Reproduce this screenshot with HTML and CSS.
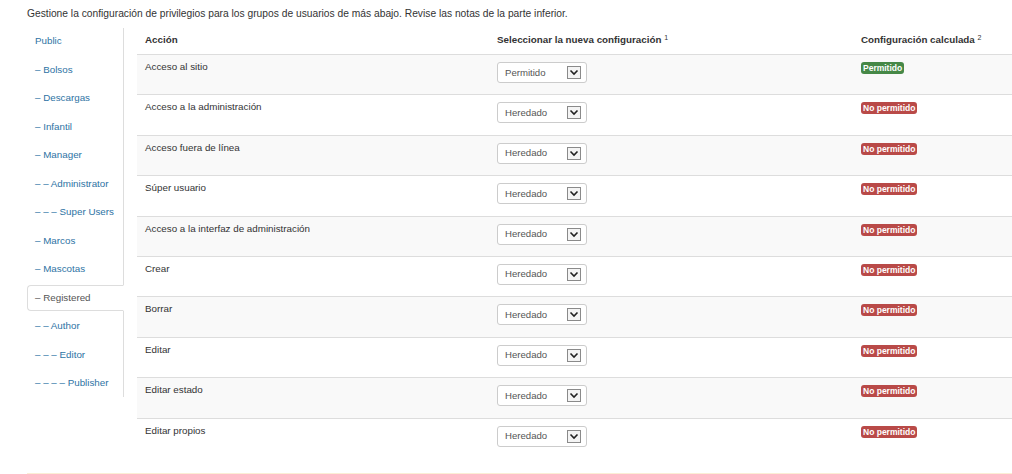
FILE: index.html
```html
<!DOCTYPE html>
<html lang="es">
<head>
    <meta charset="UTF-8">
    <meta name="viewport" content="width=device-width, initial-scale=1.0">
    <title>Permisos</title>
    <link rel="stylesheet" href="styles.css">
</head>
<body>
    <p class="intro">Gestione la configuración de privilegios para los grupos de usuarios de más abajo. Revise las notas de la parte inferior.</p>

    <div class="permissions">
        <!-- Group tabs -->
        <ul class="group-tabs">
            <li><a href="#">Public</a></li>
            <li><a href="#">– Bolsos</a></li>
            <li><a href="#">– Descargas</a></li>
            <li><a href="#">– Infantil</a></li>
            <li><a href="#">– Manager</a></li>
            <li><a href="#">– – Administrator</a></li>
            <li><a href="#">– – – Super Users</a></li>
            <li><a href="#">– Marcos</a></li>
            <li><a href="#">– Mascotas</a></li>
            <li class="active"><a href="#">– Registered</a></li>
            <li><a href="#">– – Author</a></li>
            <li><a href="#">– – – Editor</a></li>
            <li><a href="#">– – – – Publisher</a></li>
        </ul>

        <!-- Rules table -->
        <table class="rules">
            <thead>
                <tr>
                    <th class="col-action">Acción</th>
                    <th class="col-select">Seleccionar la nueva configuración <sup>1</sup></th>
                    <th>Configuración calculada <sup>2</sup></th>
                </tr>
            </thead>
            <tbody>
                <tr>
                    <td>Acceso al sitio</td>
                    <td><div class="select"><span>Permitido</span><svg class="arrow" width="14" height="13" viewBox="0 0 14 13"><rect x="0.5" y="0.5" width="13" height="12" fill="#f4f4f4" stroke="#8a8a8a"/><path d="M3.5 4.5 L7 8 L10.5 4.5" fill="none" stroke="#222" stroke-width="1.6"/></svg></div></td>
                    <td><span class="badge allowed">Permitido</span></td>
                </tr>
                <tr>
                    <td>Acceso a la administración</td>
                    <td><div class="select"><span>Heredado</span><svg class="arrow" width="14" height="13" viewBox="0 0 14 13"><rect x="0.5" y="0.5" width="13" height="12" fill="#f4f4f4" stroke="#8a8a8a"/><path d="M3.5 4.5 L7 8 L10.5 4.5" fill="none" stroke="#222" stroke-width="1.6"/></svg></div></td>
                    <td><span class="badge denied">No permitido</span></td>
                </tr>
                <tr>
                    <td>Acceso fuera de línea</td>
                    <td><div class="select"><span>Heredado</span><svg class="arrow" width="14" height="13" viewBox="0 0 14 13"><rect x="0.5" y="0.5" width="13" height="12" fill="#f4f4f4" stroke="#8a8a8a"/><path d="M3.5 4.5 L7 8 L10.5 4.5" fill="none" stroke="#222" stroke-width="1.6"/></svg></div></td>
                    <td><span class="badge denied">No permitido</span></td>
                </tr>
                <tr>
                    <td>Súper usuario</td>
                    <td><div class="select"><span>Heredado</span><svg class="arrow" width="14" height="13" viewBox="0 0 14 13"><rect x="0.5" y="0.5" width="13" height="12" fill="#f4f4f4" stroke="#8a8a8a"/><path d="M3.5 4.5 L7 8 L10.5 4.5" fill="none" stroke="#222" stroke-width="1.6"/></svg></div></td>
                    <td><span class="badge denied">No permitido</span></td>
                </tr>
                <tr>
                    <td>Acceso a la interfaz de administración</td>
                    <td><div class="select"><span>Heredado</span><svg class="arrow" width="14" height="13" viewBox="0 0 14 13"><rect x="0.5" y="0.5" width="13" height="12" fill="#f4f4f4" stroke="#8a8a8a"/><path d="M3.5 4.5 L7 8 L10.5 4.5" fill="none" stroke="#222" stroke-width="1.6"/></svg></div></td>
                    <td><span class="badge denied">No permitido</span></td>
                </tr>
                <tr>
                    <td>Crear</td>
                    <td><div class="select"><span>Heredado</span><svg class="arrow" width="14" height="13" viewBox="0 0 14 13"><rect x="0.5" y="0.5" width="13" height="12" fill="#f4f4f4" stroke="#8a8a8a"/><path d="M3.5 4.5 L7 8 L10.5 4.5" fill="none" stroke="#222" stroke-width="1.6"/></svg></div></td>
                    <td><span class="badge denied">No permitido</span></td>
                </tr>
                <tr>
                    <td>Borrar</td>
                    <td><div class="select"><span>Heredado</span><svg class="arrow" width="14" height="13" viewBox="0 0 14 13"><rect x="0.5" y="0.5" width="13" height="12" fill="#f4f4f4" stroke="#8a8a8a"/><path d="M3.5 4.5 L7 8 L10.5 4.5" fill="none" stroke="#222" stroke-width="1.6"/></svg></div></td>
                    <td><span class="badge denied">No permitido</span></td>
                </tr>
                <tr>
                    <td>Editar</td>
                    <td><div class="select"><span>Heredado</span><svg class="arrow" width="14" height="13" viewBox="0 0 14 13"><rect x="0.5" y="0.5" width="13" height="12" fill="#f4f4f4" stroke="#8a8a8a"/><path d="M3.5 4.5 L7 8 L10.5 4.5" fill="none" stroke="#222" stroke-width="1.6"/></svg></div></td>
                    <td><span class="badge denied">No permitido</span></td>
                </tr>
                <tr>
                    <td>Editar estado</td>
                    <td><div class="select"><span>Heredado</span><svg class="arrow" width="14" height="13" viewBox="0 0 14 13"><rect x="0.5" y="0.5" width="13" height="12" fill="#f4f4f4" stroke="#8a8a8a"/><path d="M3.5 4.5 L7 8 L10.5 4.5" fill="none" stroke="#222" stroke-width="1.6"/></svg></div></td>
                    <td><span class="badge denied">No permitido</span></td>
                </tr>
                <tr>
                    <td>Editar propios</td>
                    <td><div class="select"><span>Heredado</span><svg class="arrow" width="14" height="13" viewBox="0 0 14 13"><rect x="0.5" y="0.5" width="13" height="12" fill="#f4f4f4" stroke="#8a8a8a"/><path d="M3.5 4.5 L7 8 L10.5 4.5" fill="none" stroke="#222" stroke-width="1.6"/></svg></div></td>
                    <td><span class="badge denied">No permitido</span></td>
                </tr>
            </tbody>
        </table>
    </div>

    <div class="notes"></div>
</body>
</html>
```

FILE: styles.css
```css
body {
    margin: 0;
    padding: 0 0 0 27px;
    font-family: "Liberation Sans", Arial, sans-serif;
    font-size: 9.8px;
    color: #333;
    background-color: #fff;
    overflow: hidden;
}
.intro {
    margin: 0;
    padding-top: 6px;
    line-height: 16px;
    height: 22px;
    font-size: 10.25px;
}
.permissions {
    display: flex;
    align-items: flex-start;
}
.group-tabs {
    list-style: none;
    margin: 0;
    padding: 0;
    width: 96px;
    flex: none;
    border-right: 1px solid #ddd;
}
.group-tabs li {
    margin-bottom: 2px;
}
.group-tabs li:last-child {
    margin-bottom: 0;
}
.group-tabs a {
    display: block;
    padding: 6px 7px;
    line-height: 12.5px;
    border: 1px solid transparent;
    border-radius: 4px 0 0 4px;
    margin-right: -1px;
    color: #2e73a4;
    text-decoration: none;
    white-space: nowrap;
}
.group-tabs .active a {
    color: #555;
    border-color: #ddd;
    border-right-color: #fff;
    background-color: #fff;
}
.rules {
    flex: 1;
    margin-left: 13px;
    border-collapse: collapse;
}
.rules th {
    text-align: left;
    font-weight: bold;
    padding: 6px 8px 8px;
    line-height: 12px;
    border-bottom: 1px solid #ddd;
    vertical-align: top;
}
.rules sup {
    font-size: 7px;
    font-weight: normal;
    vertical-align: 3px;
    line-height: 0;
}
.col-action {
    width: 336px;
}
.col-select {
    width: 348px;
}
.rules tbody tr {
    height: 40.4px;
}
.rules tbody tr:nth-child(odd) {
    background-color: #f9f9f9;
}
.rules td {
    padding: 6px 8px 0;
    line-height: 12px;
    vertical-align: top;
    border-top: 1px solid #ddd;
}
.rules tbody tr:first-child td {
    border-top: none;
}
.select {
    display: flex;
    align-items: center;
    justify-content: space-between;
    box-sizing: border-box;
    width: 90px;
    height: 21px;
    margin-top: 1px;
    padding: 0 5px 0 7px;
    border: 1px solid #ccc;
    border-radius: 3px;
    background-color: #fff;
    color: #555;
    font-size: 9.6px;
}
.arrow {
    display: block;
}
.badge {
    display: inline-block;
    margin-top: 1px;
    padding: 0 2px;
    line-height: 12px;
    font-size: 8.5px;
    font-weight: bold;
    color: #fff;
    border-radius: 3px;
}
.allowed {
    background-color: #468847;
}
.denied {
    background-color: #b94a48;
}
.notes {
    margin-top: 15px;
    height: 30px;
    border-top: 1px solid #fbeed5;
    background-color: #fcf8e3;
}
```
